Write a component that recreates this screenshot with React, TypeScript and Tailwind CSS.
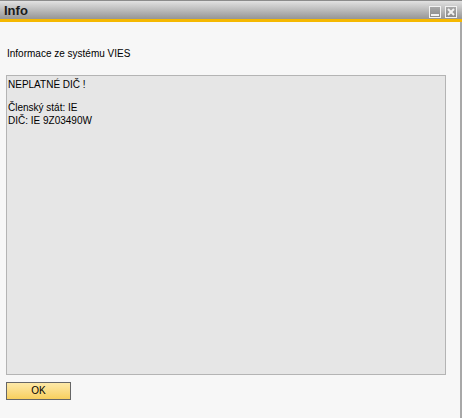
export default function App() {
  return (
    <div
      className="w-[462px] h-[418px] bg-[#f7f7f7] flex flex-col text-black"
      style={{ fontFamily: '"Liberation Sans", Arial, sans-serif' }}
    >
      {/* Title bar */}
      <div className="h-[19px] shrink-0 flex items-center justify-between pl-[4px] pr-[5px] border-t border-[#8c8c8c] bg-gradient-to-b from-[#e2e2e2] to-[#969696]">
        <span className="text-[13px] font-bold leading-none text-[#1a1a1a] mt-[1px]">Info</span>
        <div className="flex gap-[4px] mt-[3px]">
          <button className="w-[12px] h-[12px] border border-[#f2f2f2] bg-gradient-to-b from-[#a8a8a8] to-[#8a8a8a] flex items-end justify-center pb-[1px]">
            <span className="block w-[8px] h-[2px] bg-[#f2f2f2]" />
          </button>
          <button className="w-[12px] h-[12px] border border-[#f2f2f2] bg-gradient-to-b from-[#a8a8a8] to-[#8a8a8a] flex items-center justify-center">
            <svg width="8" height="8" viewBox="0 0 8 8">
              <path d="M1 1L7 7M7 1L1 7" stroke="#f2f2f2" strokeWidth="2" />
            </svg>
          </button>
        </div>
      </div>
      <div className="h-[3px] shrink-0 bg-[#f5b800]" />

      {/* Content */}
      <div className="flex-1 flex flex-col pl-[6px] pr-[14px] border-r-2 border-[#a8a8a8]">
        <p className="mt-[26px] text-[10px] leading-[12px] pl-[1px]">Informace ze systému VIES</p>
        <div className="mt-[15px] h-[300px] bg-[#e6e6e6] border border-[#b4b4b4] pl-[1px] pt-[2px] text-[10px] leading-[13px]">
          <div>NEPLATNÉ DIČ !</div>
          <div className="h-[10px]" />
          <div>Členský stát: IE</div>
          <div>DIČ: IE 9Z03490W</div>
        </div>
        <button className="mt-[7px] w-[65px] h-[18px] border border-[#666666] bg-gradient-to-b from-[#fde9a8] to-[#f8cf5c] text-[10px] leading-none">
          OK
        </button>
      </div>
    </div>
  )
}
